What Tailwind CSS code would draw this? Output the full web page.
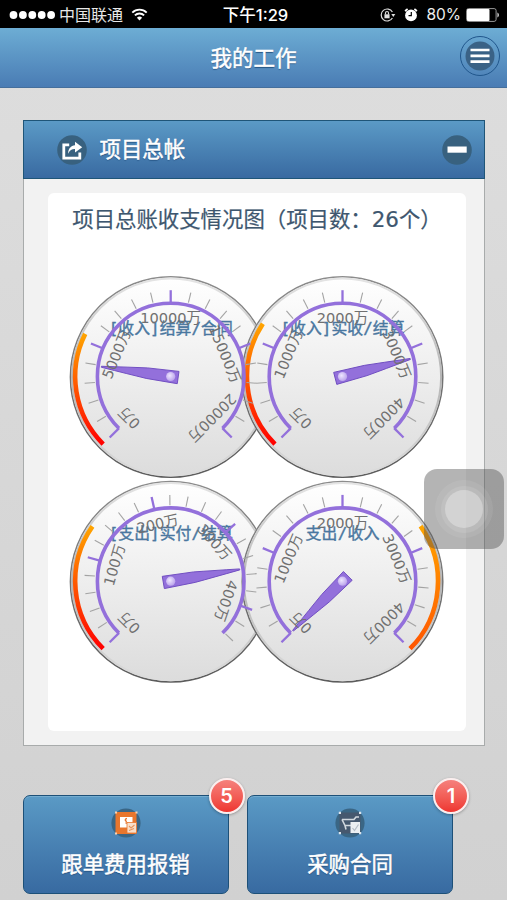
<!DOCTYPE html>
<html lang="zh-CN">

<head>
    <meta charset="UTF-8">
    <meta name="viewport" content="width=device-width, initial-scale=1.0">
    <title>我的工作</title>
    <script src="https://cdn.jsdelivr.net/npm/@tailwindcss/browser@4"></script>
</head>

<body class="bg-[#d3d3d3] font-['Liberation_Sans','Noto_Sans_CJK_SC',sans-serif]">
    <div class="relative w-[507px] h-[900px] overflow-hidden flex flex-col bg-linear-to-b from-[#dedede] to-[#d1d1d1]">

        <!-- status bar -->
        <div class="h-7 shrink-0 bg-black text-white grid grid-cols-[1fr_auto_1fr] items-center pt-0.5 pl-[9px] pr-[7px]">
            <div class="flex items-center">
                <svg width="47" height="10" fill="#fff">
                    <circle cx="4.5" cy="5" r="3.9" />
                    <circle cx="13.9" cy="5" r="3.9" />
                    <circle cx="23.3" cy="5" r="3.9" />
                    <circle cx="32.7" cy="5" r="3.9" />
                    <circle cx="42.1" cy="5" r="3.9" />
                </svg>
                <span class="ml-[3px] pt-px text-[16px] leading-5 text-[#e8e8e8] whitespace-nowrap">中国联通</span>
                <svg class="ml-2 mb-0.5" width="17" height="13" viewBox="0 0 16 13" fill="none" stroke="#fff" stroke-width="1.9">
                    <path d="M.8 4.6a10.2 10.2 0 0 1 14.4 0M3.4 7.4a6.5 6.5 0 0 1 9.2 0" />
                    <path d="M8 12.4L5.4 9.7a3.7 3.7 0 0 1 5.2 0z" fill="#fff" stroke="none" />
                </svg>
            </div>
            <div class="pl-0.5 text-[16.5px] leading-5 font-medium whitespace-nowrap font-['Inter','Noto_Sans_CJK_SC',sans-serif]">下午1:29</div>
            <div class="flex items-center justify-end">
                <svg width="16" height="14" viewBox="0 0 16 14" fill="none" stroke="#ddd" stroke-width="1.2">
                    <path d="M12.4 4A6 6 0 1 0 12.4 10" />
                    <path d="M11.3 6h4l-2 3z" fill="#ddd" stroke="none" />
                    <path d="M4.4 6.3h5.2v4H4.4z" fill="#ddd" stroke="none" />
                    <path d="M5.5 6.4V5a1.5 1.5 0 0 1 3 0v1.4" />
                </svg>
                <svg class="ml-2" width="14" height="14" viewBox="0 0 14 14">
                    <circle cx="7" cy="7.4" r="5.9" fill="#fff" />
                    <path d="M1 3L3.6 1M13 3L10.4 1" stroke="#fff" stroke-width="1.6" />
                    <path d="M7.3 4v3.7H4.5" fill="none" stroke="#000" stroke-width="1.2" />
                </svg>
                <span class="ml-2 text-[15.5px] leading-5 text-[#eee] font-['Inter',sans-serif]">80%</span>
                <svg class="ml-[5px]" width="34" height="14" viewBox="0 0 34 14">
                    <rect x=".6" y=".6" width="29.5" height="12.8" rx="2" fill="none" stroke="#999" stroke-width="1" />
                    <rect x="1" y="1" width="22.5" height="12" rx="1" fill="#fff" />
                    <path d="M31.3 4.5c2.3.8 2.3 4.2 0 5z" fill="#bbb" />
                </svg>
            </div>
        </div>

        <!-- page header -->
        <header class="relative h-[60px] shrink-0 flex items-center justify-center border-b border-[#456f9c] bg-linear-to-b from-[#6dadd4] to-[#4a7cb4]">
            <h1 class="pt-[5px] text-[21.5px] leading-none text-white [-webkit-text-stroke:.5px_#fff] [text-shadow:0_1px_1px_#1d4a78]">我的工作</h1>
            <button class="absolute right-[7px] top-2 size-10 rounded-full border-[1.5px] border-[#20568c] flex items-center justify-center">
                <svg width="30" height="30">
                    <circle cx="15" cy="15" r="14.5" fill="#3a6286" />
                    <path d="M5.5 9h19M5.5 14.9h19M5.5 20.6h19" stroke="#fff" stroke-width="2.6" />
                </svg>
            </button>
        </header>

        <!-- ledger panel -->
        <section class="mt-8 ml-[22.5px] w-[462.5px] h-[626px] shrink-0 flex flex-col">
            <div class="h-[59px] shrink-0 flex items-center border border-[#1f5578] bg-linear-to-b from-[#5b9ac6] to-[#396aa1] pl-[33px] pr-[12px]">
                <svg width="30" height="30" fill="none" stroke="#fff">
                    <circle cx="15" cy="15" r="14.8" fill="#38617f" stroke="none" />
                    <path d="M12.2 9.8H6.8v13.4h16v-5.6" stroke-width="2.8" />
                    <path d="M11 18.8c.4-5.5 2.8-8.2 7-8.6V6.8l7.2 5.4-7.2 5.2v-3.3c-3-.1-5.2 1.3-7 4.7z" fill="#fff" stroke="none" />
                </svg>
                <h2 class="ml-[13px] pt-[3px] grow text-[21.4px] leading-none text-white [-webkit-text-stroke:.5px_#fff] [text-shadow:0_1px_1px_#1d4a78]">项目总帐</h2>
                <svg width="30" height="30">
                    <circle cx="15" cy="15" r="14.8" fill="#38617f" />
                    <path d="M5.5 14.6h19.2" stroke="#fff" stroke-width="6.2" />
                </svg>
            </div>
            <div class="grow border border-t-0 border-[#a8abab] bg-[#f2f2f2] pt-[13.5px] pl-[24.5px]">
                <div class="w-[418px] h-[538px] rounded-md bg-white">
                    <h3 class="h-[52px] flex justify-center text-[21.4px] leading-[54px] whitespace-nowrap text-[#3e576f] [-webkit-text-stroke:.2px_#3e576f] font-['DejaVu_Sans','Noto_Sans_CJK_SC',sans-serif]">项目总账收支情况图（项目数：26个）</h3>
                    <svg id="gauges" width="418" height="486" viewBox="48 245 418 486"></svg>
                </div>
            </div>
        </section>

        <!-- shortcuts -->
        <div class="mt-[49px] ml-[22.5px] flex gap-[18.5px]">
            <a class="relative w-[206px] h-[99px] rounded-[7px] border border-[#1d5078] bg-linear-to-b from-[#5a9ac5] to-[#386aa1] shadow-[inset_0_1px_0_#75add0] flex flex-col items-center pt-[12px]">
                <svg width="30" height="30">
                    <circle cx="15" cy="15" r="14.6" fill="#3a6685" />
                    <rect x="4.5" y="4" width="21" height="22" fill="#e8762d" />
                    <path d="M4 3.500h2v2H4zM24.5 3.5h2v2h-2zM4 24.5h2v2H4z" fill="#f7d3b5" />
                    <path d="M9 9h12.5v10.5H9z" fill="#fff" />
                    <path d="M16 10.5c-2.400.3-2.400 2.600 0 2.800M14.500 15h3" fill="none" stroke="#e8762d" stroke-width="1.3" />
                    <path d="M16 14.5h9.500V25H16z" fill="#f9dfca" stroke="#e8762d" stroke-width=".8" />
                    <path d="M18 18l2 2 3.500-3M18 22.500l5-2" fill="none" stroke="#e8945c" stroke-width="1.1" />
                </svg>
                <span class="mt-[17px] text-[21.4px] leading-none text-white [-webkit-text-stroke:.5px_#fff] [text-shadow:0_1px_1px_#1d4a78]">跟单费用报销</span>
                <span class="absolute -top-[18px] -right-[17px] size-[36px] rounded-full border-2 border-[#fbeeee] bg-linear-to-b from-[#f5807c] to-[#ee3430] shadow-[0_1px_3px_rgba(0,0,0,.3)] flex items-center justify-center text-[20px] leading-none text-white font-semibold font-['Inter',sans-serif]">5</span>
            </a>
            <a class="relative w-[206px] h-[99px] rounded-[7px] border border-[#1d5078] bg-linear-to-b from-[#5a9ac5] to-[#386aa1] shadow-[inset_0_1px_0_#75add0] flex flex-col items-center pt-[12px]">
                <svg width="30" height="30">
                    <circle cx="15" cy="15" r="14.6" fill="#3a6685" />
                    <rect x="4.5" y="4.5" width="21" height="21" fill="#46586f" />
                    <path d="M3.800 3.800h2.200v2.200H3.800zM24 3.800h2.200v2.200H24zM3.800 24h2.200v2.200H3.800zM24 24h2.200v2.200H24z" fill="#dbe4ec" />
                    <path d="M7 11.500h12l2-2.500h3M7 11.500l3 6h7M10 17.500l1 4" fill="none" stroke="#d2d8df" stroke-width="1.6" />
                    <path d="M15.500 14h9.500V25h-9.500z" fill="#eceff2" />
                    <path d="M17.500 20l2 2.500 4-6" fill="none" stroke="#b4bcc6" stroke-width="1.2" />
                </svg>
                <span class="mt-[17px] text-[21.4px] leading-none text-white [-webkit-text-stroke:.5px_#fff] [text-shadow:0_1px_1px_#1d4a78]">采购合同</span>
                <span class="absolute -top-[18px] -right-[17px] size-[36px] rounded-full border-2 border-[#fbeeee] bg-linear-to-b from-[#f5807c] to-[#ee3430] shadow-[0_1px_3px_rgba(0,0,0,.3)] flex items-center justify-center text-[20px] leading-none text-white font-semibold font-['Inter',sans-serif]">1</span>
            </a>
        </div>

        <!-- floating touch button -->
        <div class="absolute left-[424px] top-[469px] size-20 rounded-[13px] bg-[#4c4c4c]/42 flex items-center justify-center">
            <div class="size-[58px] rounded-full bg-white/8 flex items-center justify-center">
                <div class="size-[47px] rounded-full bg-white/10 flex items-center justify-center">
                    <div class="size-[38px] rounded-full bg-white/30"></div>
                </div>
            </div>
        </div>
    </div>

    <script>
        const gauges = [
            { x: 170.7, y: 376.5, title: "[收入]结算/合同", width: 124, labels: ["0万", "5000万", "10000万", "15000万", "20000万"], step: 67.5, needle: -82, band: [-135, -63.5], low: "#ff0000" },
            { x: 342.5, y: 376.5, title: "[收入]实收/结算", width: 124, labels: ["0万", "1000万", "2000万", "3000万", "4000万"], step: 67.5, needle: 75.5, band: [-135, -56.5], low: "#ff0000" },
            { x: 170.7, y: 581.2, title: "[支出]实付/结算", width: 124, labels: ["0万", "100万", "200万", "300万", "400万"], step: 61.1, needle: 80.3, band: [-135, -55], low: "#ff0000" },
            { x: 342.5, y: 581.2, title: "支出/收入", width: 74, labels: ["0万", "1000万", "2000万", "3000万", "4000万"], step: 67.5, needle: -135, band: [54.8, 135], low: "#ff5500" },
        ];

        // angles are in degrees, clockwise from the top
        function point(g, r, deg) {
            const a = deg * Math.PI / 180;
            return (g.x + r * Math.sin(a)).toFixed(2) + " " + (g.y - r * Math.cos(a)).toFixed(2);
        }

        function arc(g, r, from, to) {
            const large = to - from > 180 ? 1 : 0;
            return `M${point(g, r, from)}A${r} ${r} 0 ${large} 1 ${point(g, r, to)}`;
        }

        let panes = "";
        let axes = "";
        let titles = "";
        let labels = "";
        let needles = "";
        let defs = `<linearGradient id="pane" x1="0" y1="0" x2="0" y2="1"><stop offset="0" stop-color="#fff"/><stop offset="1" stop-color="#dcdcdc"/></linearGradient>
            <linearGradient id="rim" x1="0" y1="0" x2="0" y2="1"><stop offset="0" stop-color="#8c8c8c"/><stop offset="1" stop-color="#5c5c5c"/></linearGradient>
            <linearGradient id="rim2" x1="0" y1="0" x2="0" y2="1"><stop offset="0" stop-color="#e4e4e4"/><stop offset=".5" stop-color="#b4b4b4"/><stop offset="1" stop-color="#ddd"/></linearGradient>
            <radialGradient id="pivot" cx=".4" cy=".4" r=".6"><stop offset="0" stop-color="#eee6ff"/><stop offset="1" stop-color="#bda6ec"/></radialGradient>`;

        gauges.forEach((g, i) => {
            const bandTop = g.y - 96 * Math.cos((i === 3 ? g.band[0] : g.band[1]) * Math.PI / 180);
            defs += `<linearGradient id="band${i}" gradientUnits="userSpaceOnUse" x1="0" y1="${bandTop}" x2="0" y2="${g.y + 68}"><stop offset="0" stop-color="#ffa500"/><stop offset="1" stop-color="${g.low}"/></linearGradient>`;

            panes += `<circle cx="${g.x}" cy="${g.y + 0.5}" r="100.3" fill="url(#pane)" stroke="url(#rim)" stroke-width="1.5"/>`;
            panes += `<circle cx="${g.x}" cy="${g.y + 0.5}" r="98.6" fill="none" stroke="url(#rim2)" stroke-width="2"/>`;
            panes += `<path d="${arc(g, 95.5, g.band[0], g.band[1])}" fill="none" stroke="url(#band${i})" stroke-width="4.6"/>`;

            const minor = g.step / 5;
            for (let n = 0; -135 + n * minor <= 135.01; n++) {
                const deg = -135 + n * minor;
                const major = n % 5 === 0;
                axes += `<path d="M${point(g, major ? 73 : 76, deg)}L${point(g, 86.3, deg)}" stroke="${major ? "#9370db" : "#a3a3a3"}" stroke-width="${major ? 2.3 : 1.1}"/>`;
            }
            axes += `<path d="${arc(g, 73.3, -135, 135)}" fill="none" stroke="#9370db" stroke-width="3.6"/>`;

            titles += `<text x="${g.x}" y="${g.y - 42.5}" textLength="${g.width}" text-anchor="middle">${g.title}</text>`;

            g.labels.forEach((text, n) => {
                const deg = -135 + n * g.step;
                labels += `<text transform="translate(${point(g, 53.5, deg)}) rotate(${deg})" text-anchor="middle">${text}</text>`;
            });

            needles += `<g transform="translate(${g.x} ${g.y}) rotate(${g.needle})">
                <path d="M-6.2 7.5H6.2L5.3-24Q3.5-42 .5-70H-.5Q-3.5-42-5.3-24Z" fill="#9370db" stroke="#6e4cc0" stroke-width=".9"/>
                <circle r="4.6" fill="url(#pivot)" transform="rotate(${-g.needle})"/></g>`;
        });

        document.getElementById("gauges").innerHTML = `<defs>${defs}</defs>
            <g>${panes}</g>
            <g fill="#4a77a0" stroke="#4a77a0" stroke-width=".4" font-size="15.8" font-family="'DejaVu Sans Mono','Noto Sans CJK SC',monospace">${titles}</g>
            <g>${axes}</g>
            <g>${needles}</g>
            <g fill="#707070" font-size="14.6" font-family="'DejaVu Sans','Noto Sans CJK SC',sans-serif">${labels}</g>`;
    </script>
</body>

</html>
